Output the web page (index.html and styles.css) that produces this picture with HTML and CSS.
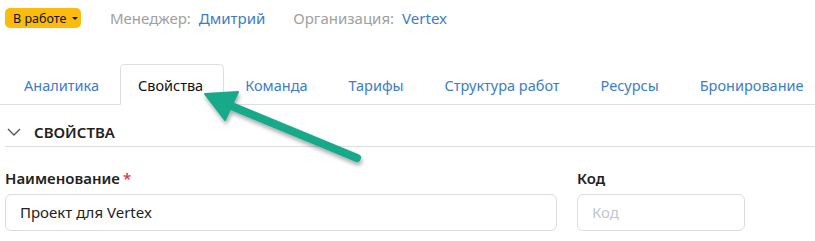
FILE: index.html
```html
<!DOCTYPE html>
<html lang="ru">
<head>
<meta charset="utf-8">
<link rel="stylesheet" href="styles.css">
</head>
<body>
<div class="page">
  <div class="meta">
    <span class="badge">В работе <span class="caret"></span></span>
    <span class="meta-item"><span class="meta-label">Менеджер:</span><a class="meta-link">Дмитрий</a></span>
    <span class="meta-item"><span class="meta-label">Организация:</span><a class="meta-link">Vertex</a></span>
  </div>
  <div class="tabs">
    <div class="tab">Аналитика</div>
    <div class="tab active">Свойства</div>
    <div class="tab">Команда</div>
    <div class="tab">Тарифы</div>
    <div class="tab">Структура работ</div>
    <div class="tab">Ресурсы</div>
    <div class="tab">Бронирование</div>
  </div>
  <div class="section-head">
    <svg class="chev" width="14" height="8" viewBox="0 0 14 8"><path d="M1 1 L7 7 L13 1" fill="none" stroke="#555" stroke-width="1.3"/></svg>
    <span class="section-title">СВОЙСТВА</span>
  </div>
  <div class="form">
    <div class="field name">
      <label class="label">Наименование<span class="req">*</span></label>
      <div class="input">Проект для Vertex</div>
    </div>
    <div class="field code">
      <label class="label">Код</label>
      <div class="input placeholder">Код</div>
    </div>
  </div>
  <svg class="arrow" width="815" height="241" viewBox="0 0 815 241">
    <defs>
      <filter id="sh" x="-20%" y="-20%" width="140%" height="140%">
        <feDropShadow dx="1" dy="3" stdDeviation="2" flood-color="#000" flood-opacity="0.35"/>
      </filter>
    </defs>
    <g filter="url(#sh)" fill="#17a98a" stroke="#17a98a">
      <line x1="357" y1="158" x2="224" y2="103" stroke-width="8" stroke-linecap="round"/>
      <polygon points="205,94 238,92 225,120" stroke-width="2" stroke-linejoin="round"/>
    </g>
  </svg>
</div>
</body>
</html>
```
FILE: styles.css
```css
* { box-sizing: border-box; }
html, body { margin: 0; padding: 0; background: #fff; }
body { font-family: "Noto Sans", "Open Sans", sans-serif; color: #222; }
.page { position: relative; width: 815px; height: 241px; overflow: hidden; }
.meta { display: flex; align-items: center; padding: 8px 0 0 5px; height: 28px; }
.badge { display: inline-flex; align-items: center; background: #fbbc0d; color: #111; border-radius: 5px; height: 20px; width: 76px; padding: 0 0 0 8px; font-size: 12.5px; white-space: nowrap; }
.caret { display: inline-block; width: 0; height: 0; border-left: 3px solid transparent; border-right: 3px solid transparent; border-top: 3.5px solid #111; margin-left: 6px; }
.meta-item { font-size: 15px; margin-left: 29px; white-space: nowrap; }
.meta-item + .meta-item { margin-left: 28px; }
.meta-label { color: #a0a0a0; margin-right: 8px; }
.meta-link { color: #3c7dc4; }
.tabs { display: flex; margin-top: 36px; border-bottom: 1px solid #dedede; height: 41px; }
.tab { flex-shrink: 0; white-space: nowrap; font-size: 14.5px; color: #3c7dc4; padding: 11px 20px 0; height: 40px; margin-right: 1px; }
.tab:first-child { padding-left: 24px; padding-right: 19px; margin-right: 2px; }
.tab.active { color: #111; border: 1px solid #dedede; border-bottom: 1px solid #fff; border-radius: 5px 5px 0 0; height: 41px; margin-bottom: -1px; background: #fff; padding-top: 10px; padding-left: 17px; padding-right: 20px; }
.section-head { display: flex; align-items: center; margin: 0 0 0 5px; height: 42px; border-bottom: 1px solid #dedede; padding-top: 12px; }
.chev { margin-left: 2px; margin-right: 13px; }
.section-title { font-size: 15px; font-weight: 600; color: #222; }
.form { display: flex; padding: 0 0 0 5px; margin-top: 21px; }
.field { display: flex; flex-direction: column; }
.field.name { width: 552px; margin-right: 20px; }
.field.code { width: 168px; }
.label { font-size: 15px; font-weight: 600; color: #222; height: 26px; }
.req { color: #e0383e; margin-left: 3px; }
.input { height: 37px; border: 1px solid #dcdcdc; border-radius: 6px; font-size: 15px; padding: 7px 0 0 14px; color: #222; }
.placeholder { color: #c3c6cc; }
.arrow { position: absolute; left: 0; top: 0; pointer-events: none; }
```
